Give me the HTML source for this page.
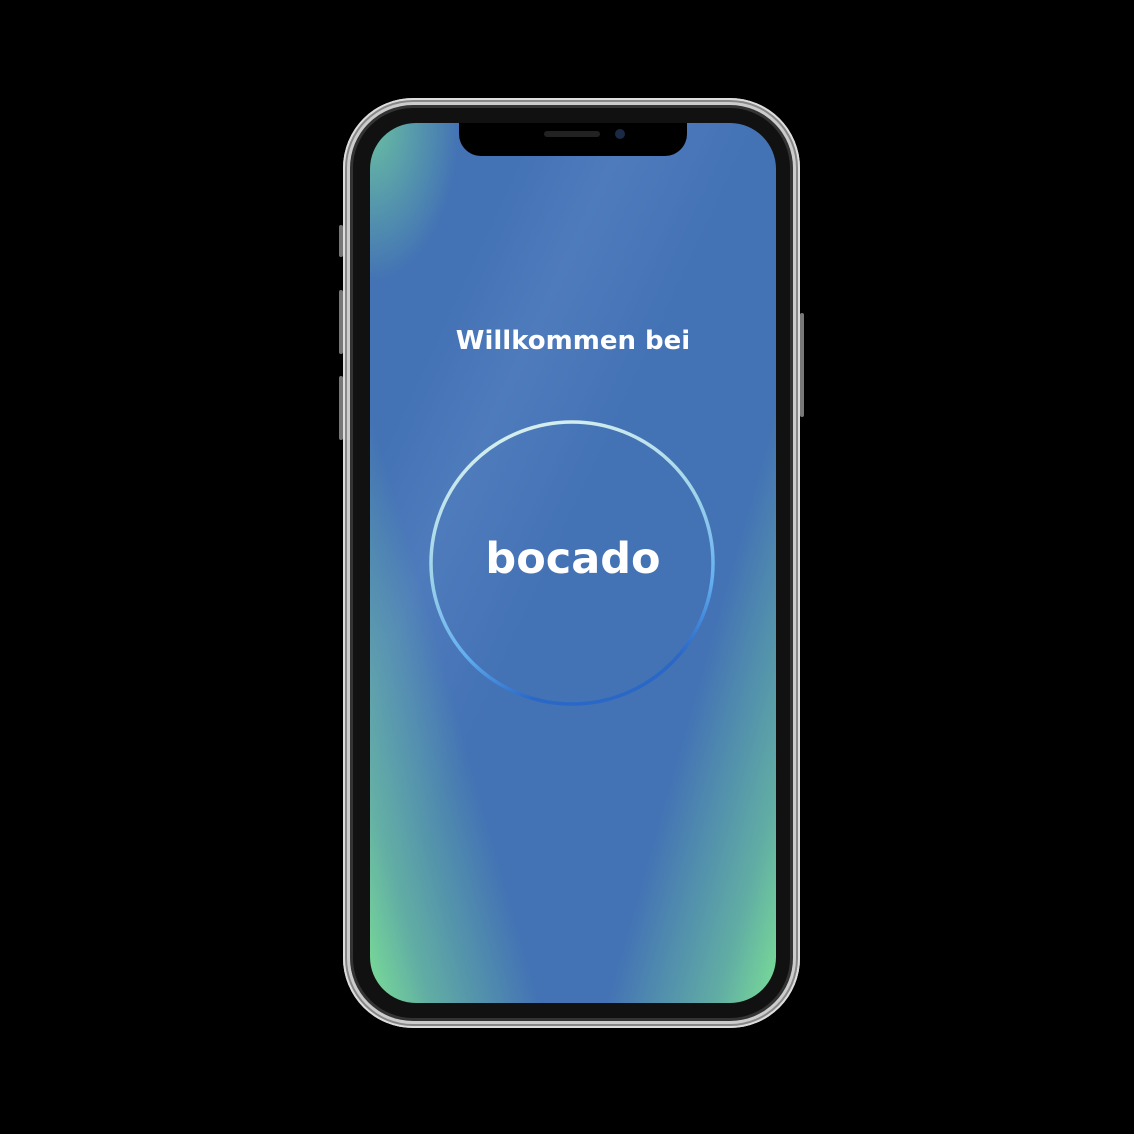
<!DOCTYPE html>
<html><head><meta charset="utf-8"><style>
html,body{margin:0;padding:0;background:#000;width:1134px;height:1134px;overflow:hidden}
.frame{position:absolute;left:343px;top:98px;width:457px;height:930px;border-radius:70px;
background:#111;box-shadow:inset 0 0 0 2px #ddd,inset 0 0 0 4px #888,inset 0 0 0 7px #ccc,inset 0 0 0 10px #333;}
.btn{position:absolute;background:#777;border-radius:2px}
.screen{position:absolute;left:370px;top:123px;width:406px;height:880px;border-radius:46px;overflow:hidden;
background:
linear-gradient(74deg, rgba(122,222,150,1) 0%, rgba(122,222,150,0.55) 9%, rgba(90,140,190,0) 26%),
linear-gradient(-74deg, rgba(122,222,150,1) 0%, rgba(122,222,150,0.55) 9%, rgba(90,140,190,0) 26%),
radial-gradient(ellipse 90px 160px at 0% 0%, rgba(110,200,160,0.9), rgba(110,200,160,0) 100%),
linear-gradient(115deg, rgba(0,0,0,0) 20%, rgba(100,140,200,0.35) 32%, rgba(0,0,0,0) 48%),
#4372b5;}
.notch{position:absolute;left:89px;top:-2px;width:228px;height:35px;background:#000;border-radius:0 0 22px 22px}
.spk{position:absolute;left:174px;top:8px;width:56px;height:6px;border-radius:3px;background:#222}
.cam{position:absolute;left:245px;top:6px;width:10px;height:10px;border-radius:50%;background:#1a2a44}
.t1{position:absolute;left:0;width:406px;top:203px;text-align:center;color:#fff;font:bold 26px "DejaVu Sans","Liberation Sans",sans-serif}
.t2{position:absolute;left:0;width:406px;top:411px;text-align:center;color:#fff;font:bold 43px "DejaVu Sans","Liberation Sans",sans-serif}
</style></head><body>
<div class="btn" style="left:339px;top:225px;width:4px;height:32px"></div>
<div class="btn" style="left:339px;top:290px;width:4px;height:64px"></div>
<div class="btn" style="left:339px;top:376px;width:4px;height:64px"></div>
<div class="btn" style="left:800px;top:313px;width:4px;height:104px"></div>
<div class="frame"></div>
<div class="screen">
<div class="notch"></div><div class="spk"></div><div class="cam"></div>
<svg style="position:absolute;left:0;top:0" width="406" height="880">
<defs><linearGradient id="g" x1="0" y1="0" x2="0.3" y2="1">
<stop offset="0" stop-color="#e4f6ee"/><stop offset="0.5" stop-color="#9fd4ea"/><stop offset="0.8" stop-color="#62aef0"/><stop offset="1" stop-color="#2a68c8"/></linearGradient></defs>
<circle cx="202" cy="440" r="141" fill="none" stroke="url(#g)" stroke-width="3.5"/>
</svg>
<div class="t1">Willkommen bei</div>
<div class="t2">bocado</div>
</div>
</body></html>
